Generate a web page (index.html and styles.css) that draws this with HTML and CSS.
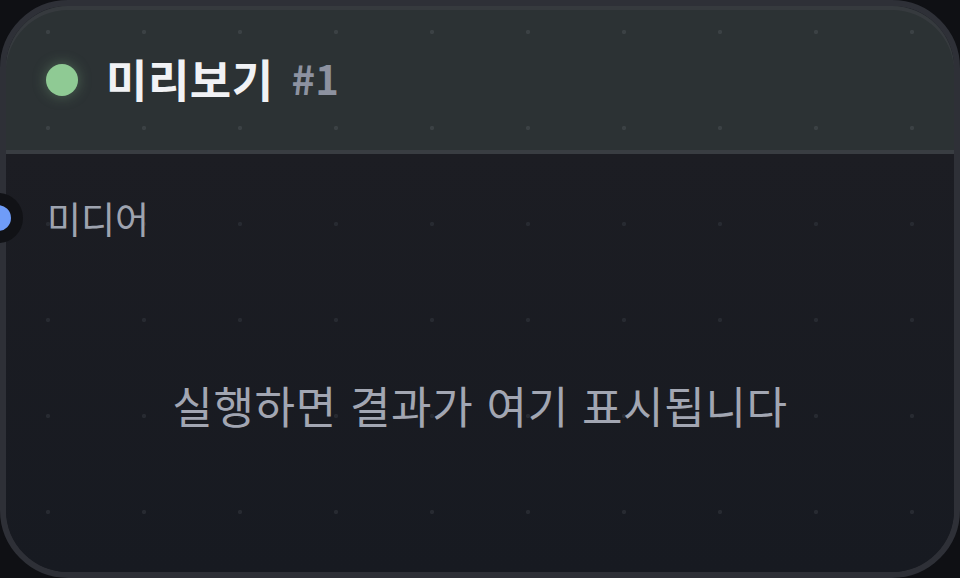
FILE: index.html
```html
<!DOCTYPE html>
<html lang="ko">
<head>
<meta charset="utf-8">
<title>미리보기</title>
<link rel="stylesheet" href="styles.css">
</head>
<body>
<div class="node">
  <div class="node-header">
    <span class="status-dot"></span>
    <span class="node-title">미리보기</span>
    <span class="node-id">#1</span>
  </div>
  <div class="node-body">
    <div class="input-row">
      <span class="socket"></span>
      <span class="input-label">미디어</span>
    </div>
    <div class="placeholder">실행하면 결과가 여기 표시됩니다</div>
  </div>
</div>
</body>
</html>
```
FILE: styles.css
```css
* { box-sizing: border-box; }
html, body {
  margin: 0;
  height: 100%;
  background: #0f1014;
  font-family: "Noto Sans CJK KR", "Noto Sans", sans-serif;
}
.node {
  width: 960px;
  height: 578px;
  border: 6px solid #2e3037;
  border-radius: 68px;
  display: flex;
  flex-direction: column;
  position: relative;
  background: #1a1c22;
}
.node-header {
  height: 148px;
  flex: none;
  display: flex;
  align-items: center;
  padding-left: 40px;
  border-bottom: 4px solid #393d42;
  border-radius: 62px 62px 0 0;
  box-shadow: inset 0 4px 0 #363a3e;
  background: radial-gradient(circle, #3b4144 1.8px, transparent 2.4px) 0 -16px / 96px 96px fixed, #2c3234;
}
.status-dot {
  width: 32px;
  height: 32px;
  border-radius: 50%;
  background: #8fca94;
  box-shadow: 0 0 14px rgba(143, 202, 148, 0.35);
  margin-top: 4px;
  flex: none;
}
.node-title {
  margin-left: 28px;
  font-size: 45px;
  font-weight: 700;
  color: #f1f2f5;
  line-height: 1;
  letter-spacing: 0.5px;
}
.node-id {
  margin-left: 18px;
  font-size: 40px;
  font-weight: 700;
  color: #8d92a0;
  line-height: 1;
}
.node-body {
  flex: 1;
  display: flex;
  flex-direction: column;
  border-radius: 0 0 62px 62px;
  background: radial-gradient(circle, #272a31 1.8px, transparent 2.4px) 0 -16px / 96px 96px fixed, linear-gradient(#1c1d23, #171a21);
}
.input-row {
  position: relative;
  height: 88px;
  padding: 40px 0 0 41px;
  flex: none;
}
.socket {
  position: absolute;
  left: -33px;
  top: 39px;
  width: 50px;
  height: 50px;
  border-radius: 50%;
  background: #6f9cf8;
  border: 12px solid #111216;
}
.input-label {
  display: block;
  font-size: 37px;
  line-height: 48px;
  color: #9ea3af;
}
.placeholder {
  flex: 1;
  display: flex;
  align-items: center;
  justify-content: center;
  font-size: 44px;
  letter-spacing: 0.7px;
  color: #a2a6b2;
  padding-bottom: 4px;
}
```
